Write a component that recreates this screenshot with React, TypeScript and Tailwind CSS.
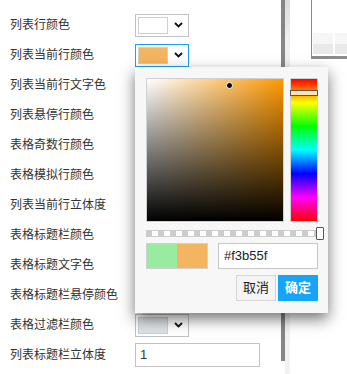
import React from 'react';

type Row = { label: string; kind: 'color' | 'input'; color?: string; active?: boolean; value?: string };

const rows: Row[] = [
  { label: '列表行颜色', kind: 'color', color: '#ffffff' },
  { label: '列表当前行颜色', kind: 'color', color: '#f3b55f', active: true },
  { label: '列表当前行文字色', kind: 'color', color: '#333333' },
  { label: '列表悬停行颜色', kind: 'color', color: '#eeeeee' },
  { label: '表格奇数行颜色', kind: 'color', color: '#f7f7f7' },
  { label: '表格模拟行颜色', kind: 'color', color: '#ffffff' },
  { label: '列表当前行立体度', kind: 'input', value: '1' },
  { label: '表格标题栏颜色', kind: 'color', color: '#eeeeee' },
  { label: '表格标题文字色', kind: 'color', color: '#333333' },
  { label: '表格标题栏悬停颜色', kind: 'color', color: '#e5e5e5' },
  { label: '表格过滤栏颜色', kind: 'color', color: '#dde2e6' },
  { label: '列表标题栏立体度', kind: 'input', value: '1' },
];

function Chevron() {
  return (
    <svg width="9" height="6" viewBox="0 0 9 6" className="block">
      <polyline points="1,1 4.5,4.5 8,1" fill="none" stroke="#111" strokeWidth="1.8" />
    </svg>
  );
}

function ColorSelect({ color, active }: { color: string; active?: boolean }) {
  return (
    <div
      className={`flex h-[23px] w-[54px] items-center border bg-white pl-[2px] ${
        active ? 'border-[#1ea0f0]' : 'border-[#c2c2c2]'
      }`}
    >
      <div className="h-[17px] w-[30px] border border-[#cfcfcf]" style={{ backgroundColor: color }} />
      <div className="flex flex-1 justify-center">
        <Chevron />
      </div>
    </div>
  );
}

function ColorPicker() {
  return (
    <div className="absolute left-[135px] top-[67px] flex h-[246px] w-[193px] flex-col bg-[#f7f7f7] p-[11px] pr-[10px] shadow-[0_6px_14px_rgba(0,0,0,0.55)]">
      <div className="flex gap-[6px]">
        <div className="relative h-[144px] w-[138px] border border-[#d0d0d0] bg-[linear-gradient(to_right,#ffffff,#ff9a00)]">
          <div className="absolute inset-0 bg-[linear-gradient(to_top,#000000,rgba(0,0,0,0))]" />
          <div className="absolute left-[79px] top-[3px] h-[7px] w-[7px] rounded-full border border-white bg-black" />
        </div>
        <div className="relative h-[144px] w-[28px] border border-[#d0d0d0] bg-[linear-gradient(to_bottom,#ff0000,#ffff00,#00ff00,#00ffff,#0000ff,#ff00ff,#ff0000)]">
          <div className="absolute left-[-1px] right-[-1px] top-[11px] h-[6px] border border-[#555] bg-white/70" />
        </div>
      </div>

      {/* alpha slider */}
      <div className="relative mt-[8px] h-[7px] w-[170px] bg-[#cccccc] py-[1px]">
        <div className="h-full w-full bg-[repeating-linear-gradient(to_right,transparent_0px,transparent_6px,#ffffff_6px,#ffffff_12px)]" />
        <div className="absolute right-[-8px] top-[-3px] h-[13px] w-[8px] rounded-[1px] border border-[#555] bg-white" />
      </div>

      <div className="mt-[6px] flex gap-[10px]">
        <div className="flex h-[26px] w-[62px] border border-[#d0d0d0]">
          <div className="flex-1 bg-[#98eba0]" />
          <div className="flex-1 bg-[#f3b55f]" />
        </div>
        <div className="flex h-[26px] w-[100px] items-center border border-[#c8c8c8] bg-white pl-[5px] text-[13px] text-[#222]">
          #f3b55f
        </div>
      </div>

      <div className="mt-[6px] flex justify-end gap-[2px]">
        <button className="h-[26px] w-[40px] border border-[#d5d5d5] bg-[#f5f5f5] text-[13px] text-[#222]">取消</button>
        <button className="h-[26px] w-[40px] bg-[#15a4f7] text-[13px] font-bold text-white">确定</button>
      </div>
    </div>
  );
}

export default function App() {
  return (
    <div
      className="relative flex h-[374px] w-[347px] overflow-hidden bg-white"
      style={{ fontFamily: '"Liberation Sans", "Noto Sans CJK SC", sans-serif' }}
    >
      {/* form column */}
      <div className="w-[281px] pt-[10px]">
        {rows.map((r) => (
          <div key={r.label} className="flex h-[30px] items-center pl-[10px]">
            <div className="w-[125px] text-[12px] text-[#333]">{r.label}</div>
            {r.kind === 'color' ? (
              <ColorSelect color={r.color!} active={r.active} />
            ) : (
              <div className="flex h-[24px] w-[125px] items-center border border-[#c2c2c2] bg-white pl-[4px] text-[13px] text-[#333]">
                {r.value}
              </div>
            )}
          </div>
        ))}
      </div>

      {/* scrollbar */}
      <div className="h-[361px] w-[4px] bg-[#868686]" />
      <div className="h-full w-[5px] bg-[linear-gradient(to_bottom,#dcdcdc,#efefef_40px,#f2f2f2)]" />

      {/* preview table */}
      <div className="ml-[21px] h-[59px] flex-1 border-b-[3px] border-l border-[#8c8c8c] pl-[1px] pt-[33px]">
        <div className="flex gap-[2px]">
          <div className="h-[21px] w-[20px] bg-[linear-gradient(to_bottom,#f6f6f6_50%,#e9e9e9_50%)]" />
          <div className="h-[21px] flex-1 bg-[linear-gradient(to_bottom,#f6f6f6_50%,#e9e9e9_50%)]" />
        </div>
      </div>

      <ColorPicker />
    </div>
  );
}
